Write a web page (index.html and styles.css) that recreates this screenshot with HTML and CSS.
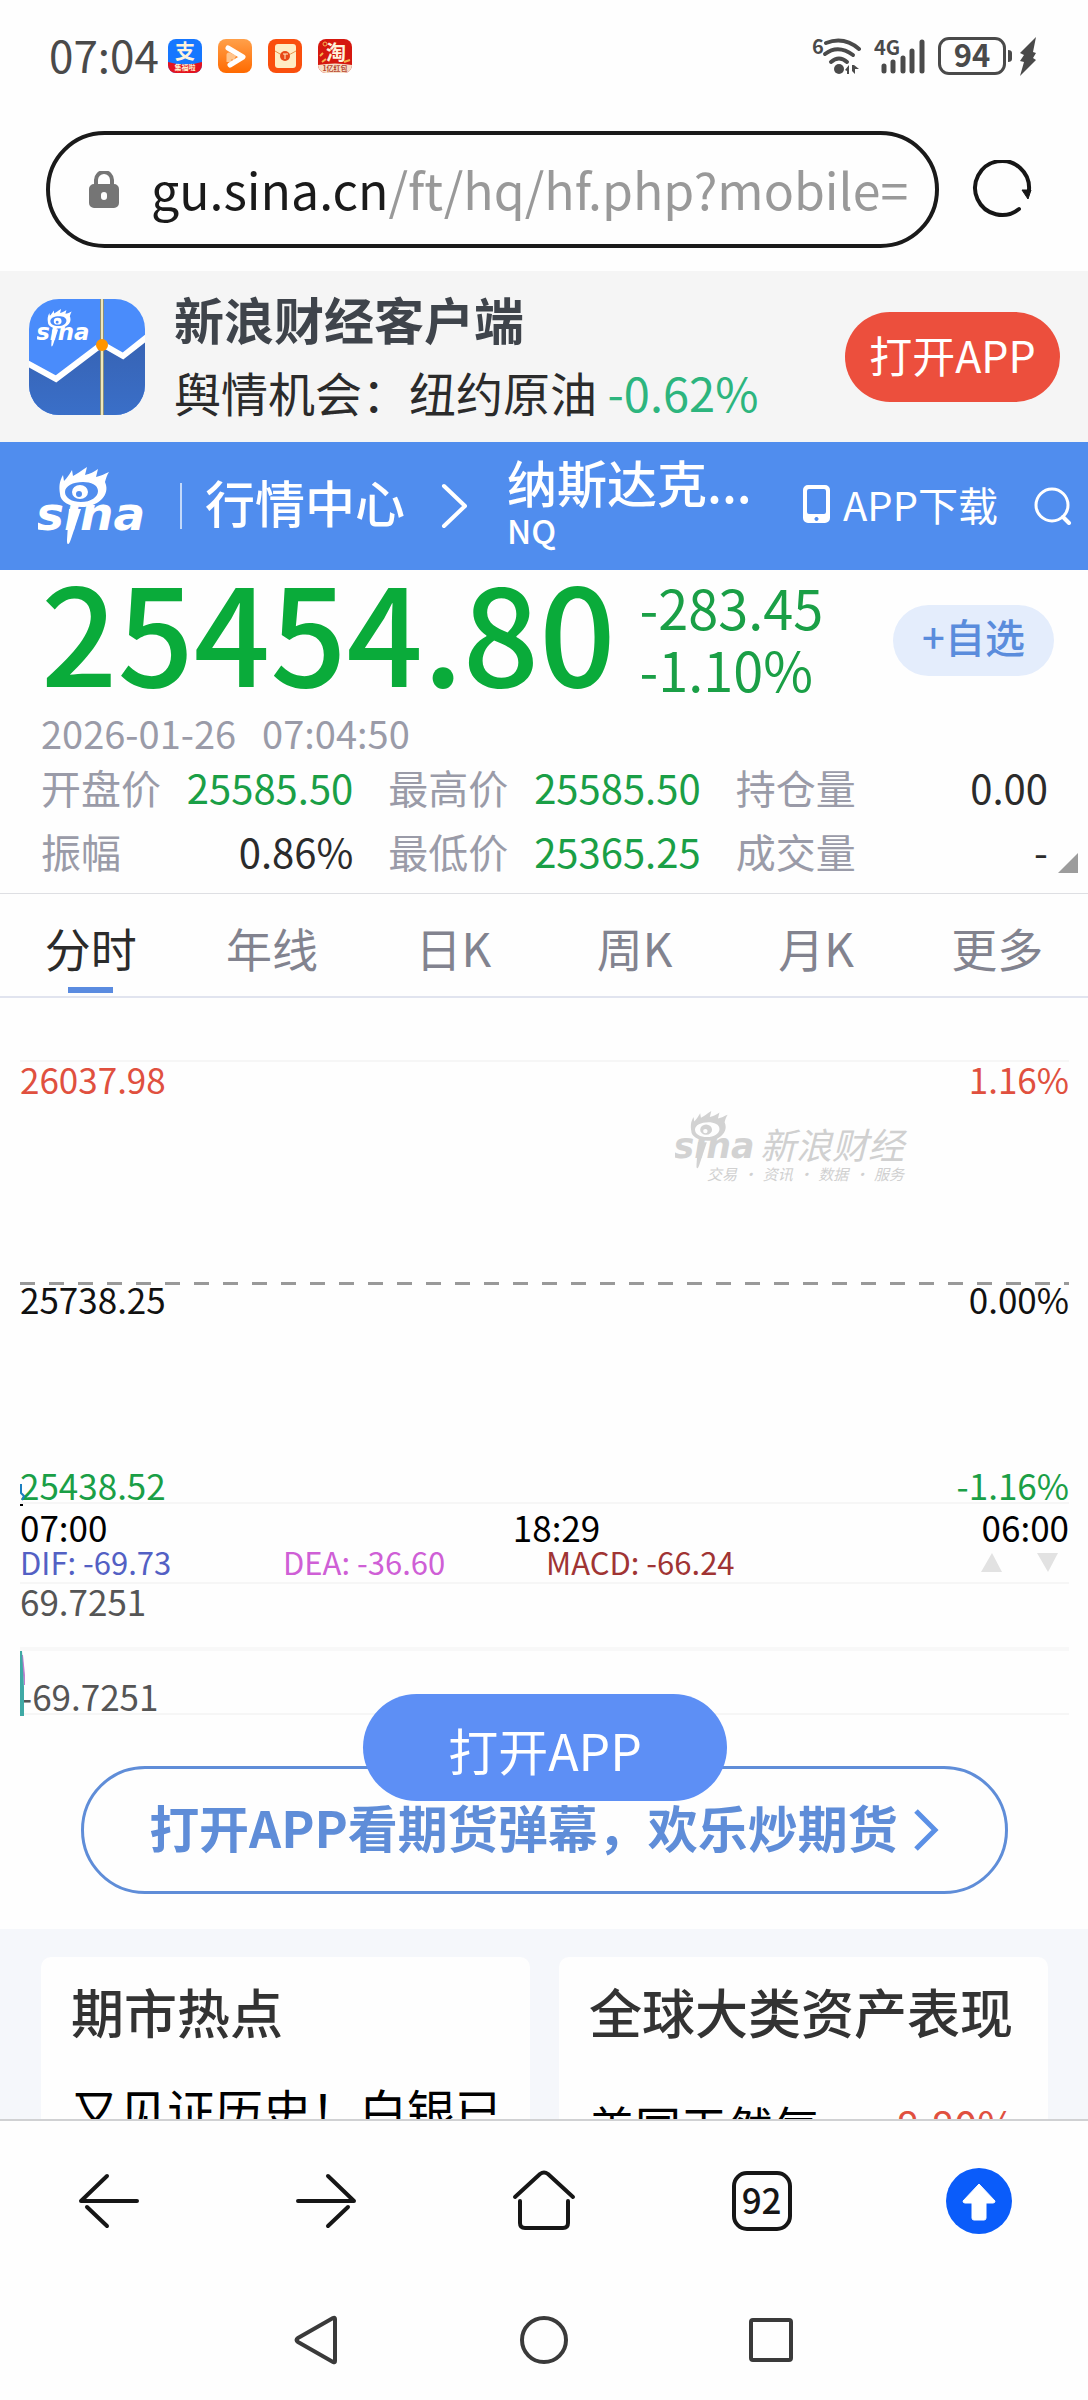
FILE: index.html
```html
<!DOCTYPE html>
<html lang="zh-CN">
<head>
<meta charset="utf-8">
<meta name="viewport" content="width=device-width, initial-scale=1">
<title>纳斯达克 NQ - 行情中心</title>
<link rel="stylesheet" href="styles.css">
</head>
<body>
<svg class="defs" aria-hidden="true">
  <symbol id="sina" viewBox="0 0 108 78">
    <path fill-rule="evenodd" d="M22 27C21 20 21 15 25 8L26 14C29 11 31 8 34 3L35 9C39 7 43 4 49 0L47 8C52 7 56 5 60 2L58 10C63 9 66 7 71 5C69 8 68 11 67 15L68 18C71 30 58 40 44 40C31 40 22 34 22 27ZM27 25C27 31 34 35 43 35C53 35 60 30 60 24C60 18 53 15 45 15C35 15 27 19 27 25Z"/>
    <path fill-rule="evenodd" d="M34 25a8 7 0 1 1 16 0a8 7 0 1 1-16 0ZM38 27a3 3 0 1 0 6 0a3 3 0 1 0-6 0Z"/>
    <path d="M31 42H43L33 72C32 75 31 77 30 77C29 77 29 75 29 73Z"/>
    <text x="-2" y="63" class="sina-word">sına</text>
  </symbol>
</svg>

<header class="status">
  <time class="clock">07:04</time>
  <div class="notices">
    <svg width="34" height="34" viewBox="0 0 34 34"><defs><clipPath id="r"><rect width="34" height="34" rx="8"/></clipPath></defs><g clip-path="url(#r)"><path fill="#1677ff" d="M0 0h34v34H0z"/><path fill="#e5121f" d="M0 23q17 5 34 0v11H0z"/><text x="17" y="20" class="glyph-l">支</text><text x="17" y="31" class="glyph-s">集福啦</text></g></svg>
    <svg width="34" height="34" viewBox="0 0 34 34"><defs><linearGradient id="o" x2="0" y2="1"><stop stop-color="#ffa04a"/><stop offset="1" stop-color="#ff6a00"/></linearGradient></defs><rect width="34" height="34" rx="8" fill="url(#o)"/><path d="M11 23V16L17 19" fill="none" stroke="#ffc48c" stroke-width="5" stroke-linejoin="round"/><path d="M10 9L25 18L12 26" fill="none" stroke="#fff" stroke-width="5" stroke-linecap="round" stroke-linejoin="round"/></svg>
    <svg width="34" height="34" viewBox="0 0 34 34"><rect width="34" height="34" rx="8" fill="#fa4f0d"/><rect x="7" y="5" width="21" height="24" rx="3" fill="#ffedc4"/><path d="M7 12Q17 20 28 12" fill="none" stroke="#e8954c" stroke-width="1"/><circle cx="17" cy="17" r="5" fill="#e84a18"/><path d="M15 15h5M17 15v5" stroke="#ffedc4" stroke-width="1"/></svg>
    <svg width="34" height="34" viewBox="0 0 34 34"><g clip-path="url(#r)"><path fill="#d5180f" d="M0 0h34v34H0z"/><path fill="#f7dfc8" d="M0 26q17-3 34 0v8H0z"/><circle cx="7" cy="5" r="2" fill="none" stroke="#f5b54c"/><path d="M4 23l4-3M26 23l6-2M2 17l3-3" stroke="#f5b54c" stroke-width="2"/><text x="18" y="21" class="glyph-l">淘</text><text x="17" y="32" class="glyph-s glyph-red">1亿红包</text></g></svg>
  </div>
  <div class="signals">
    <svg width="50" height="38" viewBox="0 0 50 38"><text x="0" y="17" class="sig-text">6</text><g fill="none" stroke="#4a4a4a" stroke-width="4" stroke-linecap="round"><path d="M14 6Q32 -1 47 12"/><path d="M13 17Q26 7 41 18"/><path d="M19 25Q27 18 35 25"/></g><circle cx="27" cy="32" r="5" fill="#4a4a4a"/><path fill="#4a4a4a" d="M33 33l4-5v9h-2v-3zM40 28h2l5 4h-4v5l-3-3z"/></svg>
    <svg width="52" height="38" viewBox="0 0 52 38"><text x="0" y="18" class="sig-text">4G</text><g stroke="#4a4a4a" stroke-width="5" stroke-linecap="round"><path d="M10 29v5M19 25v9M29 21v13M38 14v20M48 5v29"/></g></svg>
    <span class="battery">94</span>
    <svg class="bolt" width="32" height="40" viewBox="0 0 32 40"><path fill="#4a4a4a" d="M1 14q4 0 4 3v6q0 3-4 3zM29 1L13 17l4 2-4 6 4 1-4 14L29 24l-3-2 3-5-3-1z"/></svg>
  </div>
</header>

<div class="address">
  <button class="url" type="button">
    <svg width="30" height="38" viewBox="0 0 30 38"><path d="M7 14V9a8 8 0 0 1 16 0v5" fill="none" stroke="#757575" stroke-width="4"/><path fill="#757575" fill-rule="evenodd" d="M5 13h20a5 5 0 0 1 5 5v14a5 5 0 0 1-5 5H5a5 5 0 0 1-5-5V18a5 5 0 0 1 5-5zM15 21a3 3 0 0 0-3 3v2a3 3 0 0 0 6 0v-2a3 3 0 0 0-3-3z"/></svg>
    <span class="url-text">gu.sina.cn<span class="url-path">/ft/hq/hf.php?mobile=</span></span>
  </button>
  <button class="reload" type="button" aria-label="刷新">
    <svg width="60" height="60" viewBox="0 0 60 60"><path d="M47 49A27 27 0 1 1 57 30" fill="none" stroke="#161616" stroke-width="4" stroke-linecap="round"/><path d="M50 30h9l-3 9z" fill="#161616" stroke="#161616" stroke-linejoin="round"/></svg>
  </button>
</div>

<main class="page">
  <section class="banner">
    <svg class="app-icon" width="116" height="116" viewBox="0 0 116 116">
      <defs><clipPath id="app"><rect width="116" height="116" rx="30"/></clipPath><linearGradient id="deep" x2="0" y2="1"><stop stop-color="#3763b4"/><stop offset="1" stop-color="#3a6fc8"/></linearGradient></defs>
      <g clip-path="url(#app)"><path fill="#4a8cfb" d="M0 0h116v116H0z"/><path fill="url(#deep)" d="M0 66L27 82L73 48L94 60L116 41V116H0z"/><path d="M-2 64L27 80L73 45L94 57L118 38" fill="none" stroke="#fff" stroke-width="6"/><path d="M73 0v116" stroke="#8b8f78" stroke-width="4"/><path d="M73 0v116" stroke="#efe7bb" stroke-width="2"/><circle cx="73" cy="46" r="6" fill="#ff9500"/><use href="#sina" x="8" y="10" width="53" height="38" fill="#fff"/></g>
    </svg>
    <div class="banner-text">
      <strong class="banner-title">新浪财经客户端</strong>
      <p class="banner-sub">舆情机会：纽约原油 <span class="mint">-0.62%</span></p>
    </div>
    <button class="open-red" type="button">打开APP</button>
  </section>

  <nav class="topbar">
    <a href="#" class="logo" aria-label="新浪"><svg width="108" height="78"><use href="#sina" fill="#fff"/></svg></a>
    <a href="#" class="center">行情中心</a>
    <svg class="crumb" width="28" height="46" viewBox="0 0 28 46"><path d="M3 3L24 23L3 43" fill="none" stroke="#fff" stroke-width="4" stroke-linecap="round" stroke-linejoin="round"/></svg>
    <h1 class="symbol"><span class="symbol-name">纳斯达克...</span><span class="symbol-code">NQ</span></h1>
    <a href="#" class="download"><svg width="27" height="38" viewBox="0 0 27 38"><path fill="#fff" fill-rule="evenodd" d="M5 0h17a5 5 0 0 1 5 5v28a5 5 0 0 1-5 5H5a5 5 0 0 1-5-5V5a5 5 0 0 1 5-5zM6 4a2 2 0 0 0-2 2v21a2 2 0 0 0 2 2h15a2 2 0 0 0 2-2V6a2 2 0 0 0-2-2zM13 32a2 2 0 1 0 1 0z"/></svg>APP下载</a>
    <a href="#" class="search" aria-label="搜索"><svg width="38" height="38" viewBox="0 0 38 38"><circle cx="18" cy="18" r="16" fill="none" stroke="#fff" stroke-width="3"/><path d="M29 30l6 6" stroke="#fff" stroke-width="4" stroke-linecap="round"/></svg></a>
  </nav>

  <section class="quote">
    <div class="quote-head">
      <span class="price">25454.80</span>
      <div class="change"><span>-283.45</span><span>-1.10%</span></div>
      <button class="watch" type="button">+自选</button>
    </div>
    <div class="stamp"><time>2026-01-26</time><time>07:04:50</time></div>
    <dl class="stats">
      <div><dt>开盘价</dt><dd class="down">25585.50</dd></div>
      <div><dt>最高价</dt><dd class="down">25585.50</dd></div>
      <div><dt>持仓量</dt><dd>0.00</dd></div>
      <div><dt>振幅</dt><dd>0.86%</dd></div>
      <div><dt>最低价</dt><dd class="down">25365.25</dd></div>
      <div><dt>成交量</dt><dd>-</dd></div>
    </dl>
    <svg class="expand" width="20" height="20" viewBox="0 0 20 20"><path fill="#9c9c9c" d="M20 0v20H0z"/></svg>
  </section>

  <nav class="tabs">
    <a href="#" class="tab active">分时</a>
    <a href="#" class="tab">年线</a>
    <a href="#" class="tab">日K</a>
    <a href="#" class="tab">周K</a>
    <a href="#" class="tab">月K</a>
    <a href="#" class="tab">更多</a>
  </nav>

  <section class="chart">
    <div class="half high"><span>26037.98</span><span>1.16%</span></div>
    <div class="half low">
      <div class="pair"><span>25738.25</span><span>0.00%</span></div>
      <div class="pair down"><span>25438.52</span><span>-1.16%</span></div>
      <svg class="price-line" width="5" height="22" viewBox="0 0 5 22"><path d="M1 0v9l3 3-2 4" fill="none" stroke="#1b7fc0" stroke-width="2"/><path d="M0 20h3v2H0z"/></svg>
    </div>
    <div class="times"><span>07:00</span><span class="midday">18:29</span><span>06:00</span></div>
    <div class="macd-head">
      <span class="dif">DIF: -69.73</span><span class="dea">DEA: -36.60</span><span class="macd">MACD: -66.24</span>
      <svg class="arrows" width="78" height="19" viewBox="0 0 78 19"><path fill="#e2e2e2" d="M0 19L11 0L21 19zM56 0h21L67 19z"/></svg>
    </div>
    <div class="sub sub-top">69.7251</div>
    <div class="sub sub-bottom">-69.7251
      <svg class="macd-line" width="5" height="65" viewBox="0 0 5 65"><path d="M2 4L5 34" stroke="#c07ccf" stroke-width="2"/><path d="M0 0h2l2 36v29H0z" fill="#3fa9a5"/></svg>
    </div>
    <div class="watermark">
      <svg width="80" height="60"><use href="#sina" fill="#d2d2d2"/></svg>
      <div><p class="mark-name">新浪财经</p><p class="mark-sub"><span>交易</span><span>·</span><span>资讯</span><span>·</span><span>数据</span><span>·</span><span>服务</span></p></div>
    </div>
  </section>

  <a href="#" class="danmu"><span class="danmu-text">打开APP看期货弹幕，欢乐炒期货</span><svg width="28" height="44" viewBox="0 0 28 44"><path d="M4 3L23 22L4 41" fill="none" stroke="#5b90e6" stroke-width="5"/></svg></a>

  <section class="cards">
    <article class="card"><h2>期市热点</h2><p class="news">又见证历史！白银已</p></article>
    <article class="card"><h2>全球大类资产表现</h2><p class="asset"><span>美国天然气</span><span class="rise">8.80%</span></p></article>
  </section>

  <button class="open-float" type="button">打开APP</button>
</main>

<footer class="bottom">
  <nav class="browser-nav">
    <button type="button" aria-label="后退"><svg width="68" height="68" viewBox="0 0 68 68"><path d="M62 34H6L32 9M12 40L32 59" class="ink"/></svg></button>
    <button type="button" aria-label="前进"><svg width="68" height="68" viewBox="0 0 68 68"><path d="M6 34H62L36 9M56 40L36 59" class="ink"/></svg></button>
    <button type="button" aria-label="主页"><svg width="68" height="68" viewBox="0 0 68 68"><path d="M5 30L30 7Q34 4 38 7L63 30M10 34V56Q10 61 15 61H53Q58 61 58 56V34" class="ink"/></svg></button>
    <button type="button" aria-label="标签页"><span class="tab-count">92</span></button>
    <button type="button" aria-label="回到顶部"><svg width="68" height="68" viewBox="0 0 68 68"><circle cx="34" cy="34" r="33" fill="#0a5cfa"/><path d="M34 17L50 34Q50 36 48 36H41V51Q41 53 39 53H29Q27 53 27 51V36H20Q18 36 18 34Z" fill="#fff" stroke="#fff" stroke-linejoin="round"/></svg></button>
  </nav>
  <nav class="system-nav">
    <button type="button" aria-label="返回"><svg width="50" height="50" viewBox="0 0 50 50"><path d="M43 4V46Q43 48 41 47L6 27Q3 25 6 23L41 3Q43 2 43 4Z" class="sys"/></svg></button>
    <button type="button" aria-label="桌面"><svg width="50" height="50" viewBox="0 0 50 50"><circle cx="25" cy="25" r="22" class="sys"/></svg></button>
    <button type="button" aria-label="最近任务"><svg width="50" height="50" viewBox="0 0 50 50"><rect x="5" y="5" width="40" height="40" rx="2" class="sys"/></svg></button>
  </nav>
</footer>
</body>
</html>
```
FILE: styles.css
```css
* { box-sizing: border-box; margin: 0; padding: 0; }

body {
  display: flex;
  flex-direction: column;
  height: 100vh;
  background: #fefefe;
  color: #2b2b2b;
  font-family: "Noto Sans CJK SC", "Noto Sans", sans-serif;
  overflow: hidden;
}

button { border: 0; background: none; font: inherit; color: inherit; cursor: pointer; }
a { color: inherit; text-decoration: none; }
svg { display: block; flex: none; }
.defs { position: absolute; width: 0; height: 0; }
.sina-word { font: italic bold 47px "DejaVu Sans", sans-serif; }

/* status bar */
.status { display: flex; align-items: center; height: 112px; padding: 0 49px 0 49px; flex: none; color: #4a4a4a; }
.clock { width: 119px; padding-bottom: 5px; font-size: 44px; line-height: 64px; }
.notices { display: flex; gap: 16px; }
.glyph-l { font-size: 20px; font-weight: bold; text-anchor: middle; fill: #fff3dc; }
.glyph-s { font-size: 7px; font-weight: bold; text-anchor: middle; fill: #fff3d0; }
.glyph-red { fill: #b5442c; }
.signals { display: flex; align-items: center; gap: 12px; margin-left: auto; }
.sig-text { font-size: 20px; font-weight: bold; fill: #4a4a4a; }
.battery {
  width: 68px; height: 38px; border: 3px solid #4a4a4a; border-radius: 11px;
  font-size: 31px; font-weight: bold; line-height: 28px; text-align: center;
}
.bolt { margin-left: -11px; }

/* address bar */
.address { display: flex; align-items: center; gap: 33px; padding: 19px 56px 23px 46px; flex: none; }
.url {
  display: flex; align-items: center; gap: 32px; flex: 1; min-width: 0; height: 117px;
  padding: 0 0 0 39px; border: 4px solid #1a1a1a; border-radius: 59px; overflow: hidden;
}
.url-text { padding-bottom: 4px; font-size: 50px; line-height: 74px; color: #1a1a1a; white-space: nowrap; }
.url-path { color: #999; }

/* page viewport */
.page { position: relative; flex: 1; min-height: 0; overflow: hidden; }

.banner { display: flex; align-items: center; height: 171px; padding: 0 28px 0 29px; background: #f5f5f5; }
.banner-text { flex: 1; padding: 0 0 4px 29px; }
.banner-title { display: block; font-size: 50px; line-height: 73px; color: #3f444b; }
.banner-sub { font-size: 47px; line-height: 73px; white-space: nowrap; }
.mint { color: #2db57e; }
.open-red {
  width: 215px; height: 90px; padding-bottom: 6px; border-radius: 45px;
  background: #ec4f3d; color: #fff; font-size: 43px; line-height: 64px;
}

.topbar { display: flex; align-items: center; height: 128px; padding: 0 16px 0 38px; background: #508dee; color: #fff; white-space: nowrap; }
.logo { padding-right: 34px; }
.center { padding: 0 0 10px 25px; font-size: 50px; font-weight: 500; line-height: 62px; background: linear-gradient(#c3d9fa, #c3d9fa) left / 2px 46px no-repeat; }
.crumb { margin-left: 36px; }
.symbol { flex: 1; padding: 0 0 10px 38px; font-weight: 500; }
.symbol-name { display: block; font-size: 50px; line-height: 58px; }
.symbol-code { display: block; font-size: 33px; line-height: 40px; }
.download { display: flex; align-items: center; gap: 13px; padding-bottom: 4px; font-size: 40px; line-height: 58px; }
.search { margin-left: 36px; }

/* quote */
.quote { position: relative; padding: 0 40px 10px 41px; border-bottom: 1px solid #dedfe3; }
.quote-head { display: flex; align-items: flex-start; height: 140px; color: #0aab3a; }
.price { font-size: 134px; font-weight: 500; line-height: 118px; }
.change { display: flex; flex-direction: column; padding: 6px 0 0 24px; font-size: 54px; line-height: 62px; color: #1a9f46; }
.watch {
  width: 161px; height: 71px; margin: 35px -6px 0 auto; padding-bottom: 10px; border-radius: 36px;
  background: #e4edfc; color: #5a8cdc; font-size: 40px; font-weight: 500; line-height: 60px;
}
.stamp { display: flex; gap: 26px; font-size: 38px; line-height: 45px; color: #9a9ba8; }
.stats { display: grid; grid-template-columns: repeat(3, 1fr); column-gap: 35px; font-size: 40px; line-height: 64px; }
.stats div { display: flex; justify-content: space-between; }
.stats dt { color: #9a9ba8; }
.stats .down, .down { color: #1a9f46; }
.expand { position: absolute; right: 10px; bottom: 20px; }

/* period tabs */
.tabs { display: grid; grid-template-columns: repeat(6, 1fr); height: 104px; border-bottom: 2px solid #e1e4ef; }
.tab { display: flex; flex-direction: column; align-items: center; font-size: 46px; line-height: 93px; padding-top: 7px; color: #82838f; }
.tab.active { color: #2b2b2b; }
.tab.active::after { content: ""; width: 45px; height: 6px; margin-top: -7px; background: #5a8be0; }

/* chart */
.chart { position: relative; padding: 62px 19px 0 20px; font-size: 35px; line-height: 34px; }
.half { display: flex; justify-content: space-between; height: 222px; border-top: 2px solid #f6f6f6; }
.high { color: #e0503f; }
.low {
  position: relative; flex-direction: column; border-top: 0; border-bottom: 2px solid #f6f6f6; color: #111;
  background: repeating-linear-gradient(90deg, #999 0 15px, transparent 15px 29px) top / 100% 3px no-repeat;
}
.pair { display: flex; justify-content: space-between; }
.price-line { position: absolute; left: 0; bottom: -4px; }
.times { display: flex; justify-content: space-between; line-height: 46px; color: #000; }
.midday { padding-left: 24px; }
.macd-head { display: grid; grid-template-columns: 263px 263px 1fr auto; align-items: center; height: 34px; padding-bottom: 10px; border-bottom: 2px solid #f6f6f6; font-size: 31px; line-height: 24px; }
.dif { color: #5360c4; }
.dea { color: #cf5fd6; }
.macd { color: #a03434; }
.arrows { margin-right: 10px; }
.sub { color: #555; }
.sub-top { height: 67px; border-bottom: 4px solid #f8f8f8; }
.sub-bottom { position: relative; height: 64px; padding-top: 28px; border-bottom: 2px solid #f6f6f6; }
.macd-line { position: absolute; left: 0; top: 0; }
.watermark { position: absolute; right: 184px; top: 112px; display: flex; align-items: flex-start; color: #d0d0d0; font-style: italic; }
.mark-name { padding: 14px 0 0 5px; font-size: 36px; line-height: 38px; }
.mark-sub { display: flex; justify-content: space-between; margin-left: -48px; font-size: 15px; line-height: 24px; }

.danmu {
  display: flex; align-items: center; justify-content: center; gap: 14px;
  height: 128px; margin: 51px 80px 35px 81px; border: 3px solid #5f8dd8; border-radius: 64px;
  color: #5f8dd8; font-size: 50px; font-weight: bold; line-height: 74px; white-space: nowrap;
}
.danmu-text { padding-bottom: 8px; }

/* cards */
.cards { display: grid; grid-template-columns: repeat(2, minmax(0, 1fr)); gap: 29px; padding: 28px 40px 28px 41px; background: #f5f7fb; }
.card { padding: 16px 32px 40px 30px; border-radius: 10px; background: #fefefe; white-space: nowrap; }
.card h2 { font-size: 53px; font-weight: 500; line-height: 77px; color: #333; }
.news { padding-top: 22px; font-size: 48px; line-height: 74px; color: #000; }
.asset { display: flex; justify-content: space-between; padding-top: 38px; font-size: 46px; line-height: 74px; color: #000; }
.rise { color: #e0503f; font-size: 42px; }

.open-float {
  position: absolute; left: 50%; bottom: 318px; width: 364px; height: 107px; margin-left: -181px; padding-top: 2px;
  border-radius: 54px; background: #5d8ff5; color: #fff; font-size: 50px; line-height: 74px;
}

/* bottom bars */
.bottom { flex: none; border-top: 2px solid #d0d1d3; background: #fefefe; }
.browser-nav { display: grid; grid-template-columns: repeat(5, 1fr); justify-items: center; padding: 46px 0 47px; }
.browser-nav button { display: flex; align-items: center; justify-content: center; height: 68px; }
.ink { fill: none; stroke: #161616; stroke-width: 4; stroke-linecap: round; stroke-linejoin: round; }
.tab-count { width: 60px; height: 60px; border: 4px solid #161616; border-radius: 15px; font-size: 35px; font-weight: 500; line-height: 47px; color: #161616; }
.system-nav { display: flex; justify-content: center; gap: 177px; padding: 33px 0 35px; }
.sys { fill: none; stroke: #3a3a3a; stroke-width: 4; }
```
